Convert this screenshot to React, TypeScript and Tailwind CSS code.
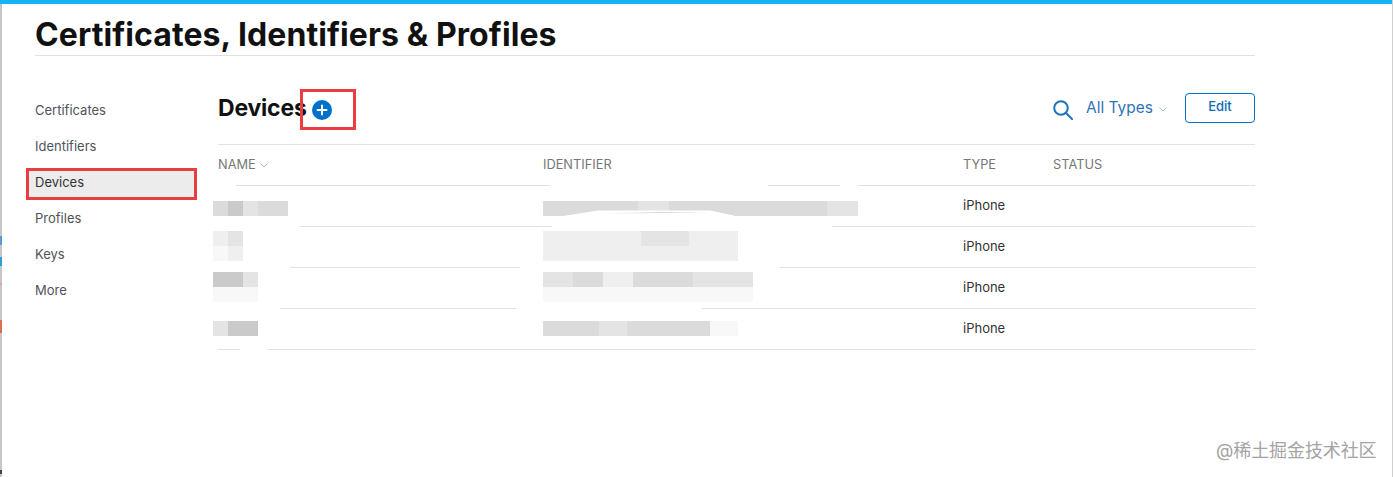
const navItems = ["Certificates", "Identifiers", "Devices", "Profiles", "Keys", "More"];

const blocks = {
  dark: "h-[15px] bg-[#cacaca]",
  mid: "h-[15px] bg-[#dbdbdb]",
  light: "h-[15px] bg-[#e4e4e4]",
  pale: "h-[15px] bg-[#efefef]",
  faint: "h-[15px] bg-[#f8f8f8]",
};

function Pixels({ rows, width }: { rows: string[][]; width: string }) {
  return (
    <div className={`flex flex-col ${width}`}>
      {rows.map((row, i) => (
        <div key={i} className="flex">
          {row.map((c, j) => (
            <div key={j} className={`flex-1 ${c}`} />
          ))}
        </div>
      ))}
    </div>
  );
}

const rows = [
  {
    name: { w: "w-[75px]", r: [[blocks.mid, blocks.dark, blocks.light, blocks.mid, blocks.mid]] },
    id: { w: "w-[315px]", r: [[blocks.mid, blocks.mid, blocks.mid, blocks.light, blocks.mid, blocks.mid, blocks.mid, blocks.mid, blocks.mid, blocks.light]] },
    align: "pt-[15px]",
    gaps: ["left-[-5px] w-[87px]", "left-[334px] w-[280px]"],
  },
  {
    name: { w: "w-[30px]", r: [[blocks.pale, blocks.light], [blocks.faint, blocks.pale]] },
    id: { w: "w-[195px]", r: [[blocks.pale, blocks.pale, blocks.light, blocks.pale], [blocks.pale, blocks.pale, blocks.pale, blocks.pale]] },
    align: "pt-[4px]",
    gaps: ["left-[-5px] w-[77px]", "left-[302px] w-[260px]"],
  },
  {
    name: { w: "w-[45px]", r: [[blocks.dark, blocks.dark, blocks.light], [blocks.faint, blocks.faint, blocks.faint]] },
    id: { w: "w-[210px]", r: [[blocks.light, blocks.mid, blocks.pale, blocks.mid, blocks.mid, blocks.light, blocks.light], [blocks.faint, blocks.faint, blocks.faint, blocks.faint, blocks.faint, blocks.faint, blocks.faint]] },
    align: "pt-[4px]",
    gaps: ["left-[-5px] w-[67px]", "left-[298px] w-[186px]"],
  },
  {
    name: { w: "w-[45px]", r: [[blocks.light, blocks.dark, blocks.dark]] },
    id: { w: "w-[195px]", r: [[blocks.mid, blocks.mid, blocks.light, blocks.mid, blocks.mid, blocks.mid, blocks.faint]] },
    align: "pt-[12px]",
    gaps: ["left-[22px] w-[28px]"],
  },
];

function Row({ row, streak }: { row: (typeof rows)[number]; streak?: boolean }) {
  return (
    <div className="relative grid h-[41px] grid-cols-[325px_420px_1fr] border-b border-[#e3e3e3]">
      <div className={`ml-[-5px] ${row.align}`}>
        <Pixels rows={row.name.r} width={row.name.w} />
      </div>
      <div className={row.align}>
        <Pixels rows={row.id.r} width={row.id.w} />
      </div>
      <div className="pt-[10px] text-[13px] leading-[18px] text-[#333333]">iPhone</div>
      {row.gaps.map((g) => (
        <div key={g} className={`absolute bottom-[-1px] h-[1px] bg-white ${g}`} />
      ))}
      {streak && (
        <svg width="175" height="8" viewBox="0 0 175 8" className="absolute top-[23px] left-[342px]">
          <path d="M0 7.5L38 1.5 150 1.5 174 6.5 174 8 0 8Z" fill="#fff" />
          <path d="M45 4.5L100 3 148 3 105 4Z" fill="#d8d8d8" />
        </svg>
      )}
    </div>
  );
}

export default function App() {
  return (
    <div
      className="relative h-[477px] w-[1393px] overflow-hidden border-r border-r-[#cfcfcf] bg-white pl-[2px]"
      style={{ fontFamily: "Inter, 'Noto Sans CJK SC', sans-serif" }}
    >
      <div className="absolute top-0 bottom-0 left-0 w-[2px] bg-[#c6c6c6]" />
      <div className="relative ml-[-2px] h-1 bg-[#14b5f5]" />
      <div className="ml-[33px] w-[1220px]">
        <h1 className="h-[52px] border-b border-[#e0e0e0] pt-[11px] text-[32px] leading-[39px] font-bold tracking-[0.08px] text-[#111111]">
          Certificates, Identifiers &amp; Profiles
        </h1>
      </div>

      <div className="flex">
        <nav className="ml-[26px] flex w-[190px] shrink-0 flex-col pt-[37px]">
          {navItems.map((item) => (
            <div
              key={item}
              className={`flex h-[36px] items-center pl-[7px] text-[13px] ${
                item === "Devices" ? "relative text-[#333333]" : "text-[#50535a]"
              }`}
            >
              {item === "Devices" && (
                <div className="absolute top-[3px] left-[-2px] h-[32px] w-[171px] border-[3px] border-[#ea3d3f] bg-[#ececec]" />
              )}
              <span className="relative">{item}</span>
            </div>
          ))}
        </nav>

        <main className="w-[1037px]">
          <div className="h-[89px] border-b border-[#e3e3e3] pt-[37px]">
            <div className="flex h-[30px] w-full items-center">
              <h2 className="text-[23px] leading-[30px] font-bold tracking-[-0.2px] text-[#111111]">Devices</h2>
              <svg width="20" height="20" viewBox="0 0 20 20" className="mt-[3px] ml-[5px]">
                <circle cx="10" cy="10" r="10" fill="#0070c9" />
                <path d="M10 5.5v9M5.5 10h9" stroke="#fff" strokeWidth="2" strokeLinecap="round" />
              </svg>
              <div className="ml-auto flex items-center">
                <svg width="20" height="20" viewBox="0 0 20 20" fill="none" stroke="#1a75bb" strokeWidth="2" className="mt-[3px]">
                  <circle cx="8" cy="8" r="6.8" />
                  <path d="M12.8 12.8l6.2 6.2" strokeLinecap="round" />
                </svg>
                <span className="ml-[13px] text-[15.5px] leading-[20px] text-[#2f74b8]">All Types</span>
                <svg width="8" height="6" viewBox="0 0 8 6" fill="none" stroke="#a9bcd0" strokeWidth="1" className="mt-[2px] ml-[6px]">
                  <path d="M.5 1.5L4 5l3.5-3.5" />
                </svg>
                <button className="mt-[-1px] ml-[18px] h-[30px] w-[70px] rounded-[4px] border border-[#0070c9] pb-[2px] text-[13px] font-medium text-[#0a6cb8]">
                  Edit
                </button>
              </div>
            </div>
          </div>

          <div className="relative grid h-[41px] grid-cols-[325px_420px_90px_1fr] items-center border-b border-[#e3e3e3] text-[12.8px] text-[#777777]">
            <div className="flex items-center">
              NAME
              <svg width="8" height="5" viewBox="0 0 8 5" fill="none" stroke="#b5b5b5" strokeWidth="1" className="mt-[1px] ml-[4px]">
                <path d="M.5.5L4 4 7.5.5" />
              </svg>
            </div>
            <div>IDENTIFIER</div>
            <div>TYPE</div>
            <div>STATUS</div>
            <div className="absolute bottom-[-1px] left-0 h-[1px] w-[18px] bg-white" />
            <div className="absolute bottom-[-1px] left-[332px] h-[1px] w-[218px] bg-white" />
            <div className="absolute bottom-[-1px] left-[622px] h-[1px] w-[18px] bg-white" />
          </div>

          {rows.map((row, i) => (
            <Row key={i} row={row} streak={i === 0} />
          ))}
        </main>
      </div>

      <div className="absolute top-[89px] left-[300px] h-[41px] w-[56px] border-[3px] border-[#ea3d3f]" />
      <div className="absolute top-[439px] left-[1216px] text-[18px] leading-[24px] tracking-[-0.1px] text-[#a3a3a3]">
        @稀土掘金技术社区
      </div>

      <div className="absolute top-[236px] left-0 h-[9px] w-[2px] bg-[#5a9bd8]" />
      <div className="absolute top-[257px] left-0 h-[9px] w-[2px] bg-[#2f9bd0]" />
      <div className="absolute top-[283px] left-0 h-[2px] w-[2px] bg-[#e8a090]" />
      <div className="absolute top-[320px] left-0 h-[13px] w-[2px] bg-[#d9714f]" />
      <div className="absolute top-[470px] left-0 h-[4px] w-[2px] bg-[#444444]" />
    </div>
  );
}
